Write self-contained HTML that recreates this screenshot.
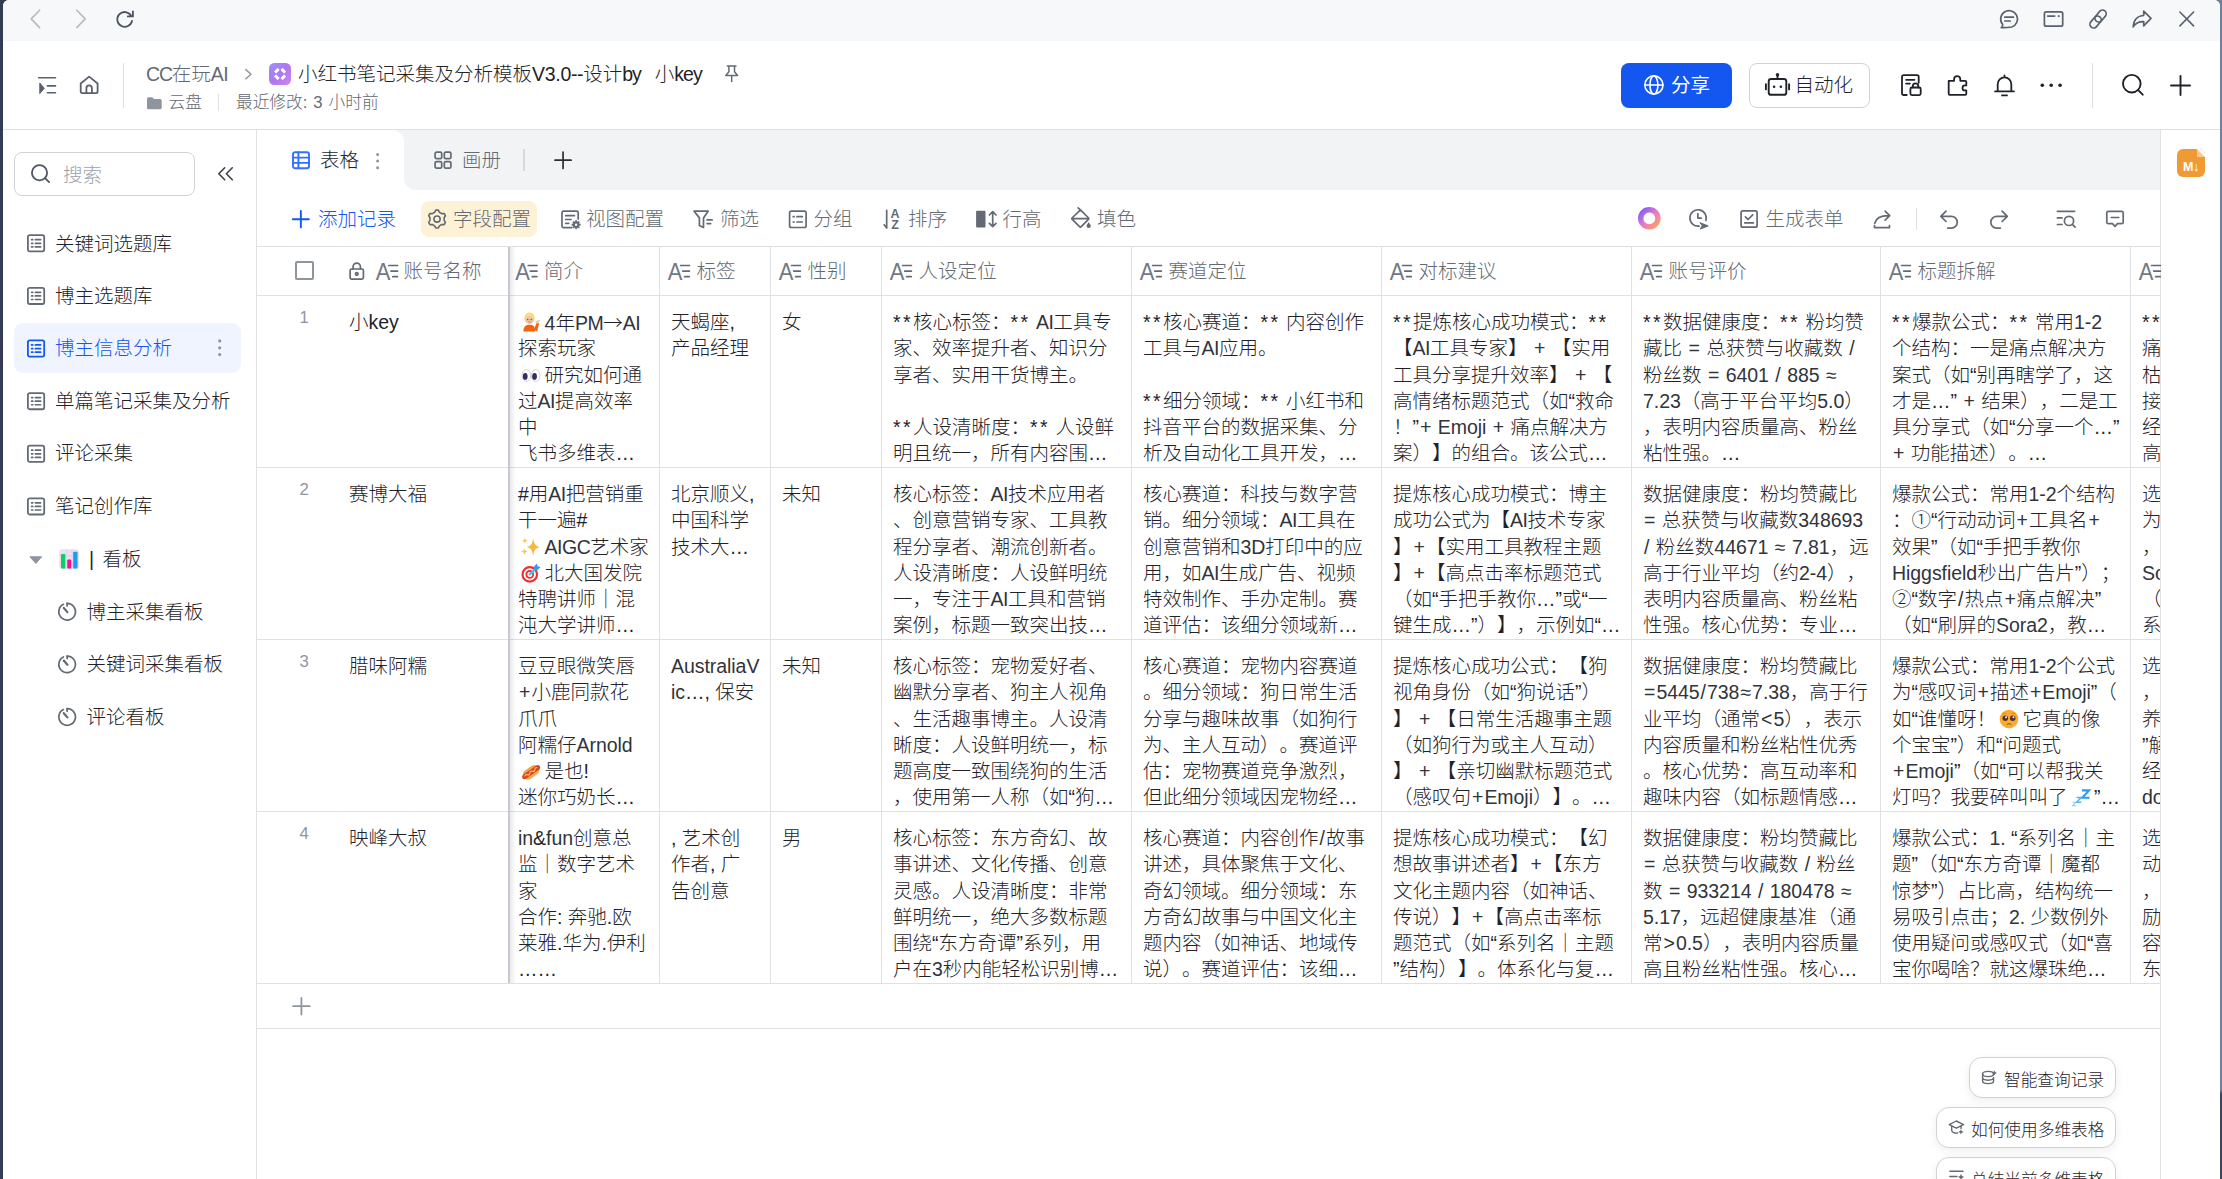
<!DOCTYPE html><html lang="zh-CN"><head><meta charset="utf-8"><title>小红书笔记采集及分析模板V3.0</title><style>*{box-sizing:border-box;margin:0;padding:0}
html,body{width:2222px;height:1179px;overflow:hidden;background:#fff}
body{position:relative;font-family:"Liberation Sans","Noto Sans CJK SC",sans-serif;font-size:19.5px;color:#1f2329;font-weight:300;-webkit-font-smoothing:antialiased;text-spacing-trim:space-all;font-kerning:none}
.abs{position:absolute}
#edgeL{position:absolute;left:0;top:0;width:14px;height:1179px;background:#343c53}
#edgeR{position:absolute;left:2206px;top:0;width:16px;height:1179px;background:linear-gradient(#6f7ea3 0,#6f7ea3 1090px,#3b4562 1094px)}
#win{position:absolute;left:3px;top:0;width:2217px;height:1179px;background:#fff;border-radius:6px 6px 0 0;overflow:hidden}
#pg{position:absolute;left:-3px;top:0;width:2222px;height:1179px}
#topbar{position:absolute;left:0;top:0;width:2222px;height:41px;background:#f7f8fa}
#header{position:absolute;left:0;top:41px;width:2222px;height:89px;background:#fff;border-bottom:1px solid #dee0e3}
.t{position:absolute;white-space:nowrap;line-height:26px;margin-left:-1px}
.g{color:#646a73}
.s{font-size:16.7px}
#sidebar{position:absolute;left:0;top:130px;width:257px;height:1049px;border-right:1px solid #dee0e3;background:#fff}
#search{position:absolute;left:14px;top:22px;width:181px;height:44px;border:1px solid #d0d3d6;border-radius:8px}
.si{position:absolute;left:56px;margin-left:-1px;white-space:nowrap;line-height:26px}
#act{position:absolute;left:14px;top:193px;width:227px;height:50px;border-radius:9px;background:#eff4ff}
#tabbar{position:absolute;left:257px;top:130px;width:1903px;height:60px;background:#f2f3f5}
#tabA{position:absolute;left:0;top:0;width:147px;height:60px;background:#fff;border-radius:0 12px 0 0}
#tabC{position:absolute;left:147px;top:48px;width:12px;height:12px;background:#fff}
#tabC i{position:absolute;left:0;top:0;width:12px;height:12px;background:#f2f3f5;border-radius:0 0 0 12px}
#toolbar{position:absolute;left:257px;top:190px;width:1903px;height:56px;background:#fff}
#fcfg{position:absolute;left:164px;top:11px;width:116px;height:36px;border-radius:8px;background:#fef2d6}
#rpanel{position:absolute;left:2160px;top:130px;width:60px;height:1049px;border-left:1px solid #dee0e3;background:#fff}
#grid{position:absolute;left:257px;top:246px;width:1903px;height:933px;overflow:hidden;border-top:1px solid #dee0e3}
.hrow{position:absolute;left:0;top:0;width:2200px;height:48px}
.hc{position:absolute;top:0;height:48px;border-left:1px solid #dee0e3;color:#646a73}
.hc.first{left:0;width:252px;border-left:none}
.hname{position:absolute;top:11px;margin-left:-1.5px;line-height:26px;white-space:nowrap}
.cb{position:absolute;left:38px;top:14px;width:19px;height:19px;border:2px solid #8f959e;border-radius:2px}
.row{position:absolute;left:0;width:2200px;height:173px;border-top:1px solid #dee0e3;border-bottom:1px solid #dee0e3}
.c{position:absolute;top:0;height:171px;border-left:1px solid #dee0e3;padding:13px 0 0 11px;overflow:hidden}
.c.first{left:0;width:252px;border-left:none;padding-left:92px}
.ln{height:26.3px;line-height:26.3px;white-space:nowrap}
.num{position:absolute;left:42.5px;top:9px;font-size:16.7px;color:#8f959e;line-height:26px}
.addrow{position:absolute;left:0;top:737px;width:2200px;height:45px;border-bottom:1px solid #dee0e3}
.frozen{position:absolute;left:251px;top:0;width:8px;height:736px;background:linear-gradient(90deg,#c3c7cd 0,#c3c7cd 1px,rgba(31,35,41,.11) 1px,rgba(31,35,41,0) 8px)}
.em{display:inline-block;width:20px;height:20px;vertical-align:-3.5px;margin:0 3.3px;overflow:visible}
.fb{position:absolute;height:41px;border:1px solid #d0d3d6;border-radius:13px;background:#fff;box-shadow:0 3px 10px rgba(31,35,41,.07);font-size:16.7px;line-height:39px;white-space:nowrap;color:#1f2329}
.fb span{position:absolute;top:2.5px}
#icons{position:absolute;left:0;top:0;width:2222px;height:1179px;pointer-events:none}

#tv{letter-spacing:-.3px}
#tb{letter-spacing:-1.1px;margin-right:14px}
#tk{letter-spacing:-.9px}
.la{letter-spacing:-.05px}
.lu{letter-spacing:-.5px}
.sy{padding:0 1px}
.ast{letter-spacing:2.4px}
.name .la{letter-spacing:-.7px}
.c0{padding-left:8px}
.la,.lu,.sy{color:#30343b}
.ar{font-family:"Noto Sans CJK SC",sans-serif}
</style></head><body>
<div id="edgeL"></div><div id="edgeR"></div>
<div id="win"><div id="pg">
<div id="topbar"></div>
<div id="header">
</div>
<div class="t g" style="left:147px;top:61px"><span style="letter-spacing:-1.2px">CC</span>在玩<span style="letter-spacing:-.6px">AI</span></div>
<div class="t" style="left:299px;top:61px" id="title">小红书笔记采集及分析模板<span id="tv">V3.0--</span>设计<span id="tb">by</span>小<span id="tk">key</span></div>
<div class="t g s" style="left:169.5px;top:90px">云盘</div>
<div class="abs" style="left:218px;top:94px;width:1px;height:17px;background:#dee0e3"></div>
<div class="t g s" style="left:237px;top:90px;word-spacing:1.3px">最近修改: 3 小时前</div>
<div class="abs" style="left:123px;top:63px;width:1px;height:45px;background:#dee0e3"></div>
<div class="abs" style="left:1621px;top:63px;width:111px;height:45px;border-radius:8px;background:#1456f0"></div>
<div class="t" style="left:1672px;top:72px;color:#fff;font-weight:400">分享</div>
<div class="abs" style="left:1749px;top:63px;width:121px;height:45px;border-radius:8px;border:1px solid #d0d3d6;background:#fff"></div>
<div class="t" style="left:1795.5px;top:72px">自动化</div>
<div class="abs" style="left:2092px;top:63px;width:1px;height:45px;background:#dee0e3"></div>

<div id="sidebar">
 <div id="search"></div>
 <div class="t" style="left:64px;top:31.5px;color:#9da2aa">搜索</div>
 <div id="act"></div>
 <div class="si" style="top:100.5px">关键词选题库</div>
 <div class="si" style="top:152.5px">博主选题库</div>
 <div class="si" style="top:205px;color:#1456f0">博主信息分析</div>
 <div class="si" style="top:258px">单篇笔记采集及分析</div>
 <div class="si" style="top:310px">评论采集</div>
 <div class="si" style="top:363px">笔记创作库</div>
 <div class="si" style="top:416px;left:90px;word-spacing:3px">| 看板</div>
 <div class="si" style="top:468.5px;left:87.5px">博主采集看板</div>
 <div class="si" style="top:521px;left:87.5px">关键词采集看板</div>
 <div class="si" style="top:574px;left:87.5px">评论看板</div>
</div>

<div id="tabbar"><div id="tabA"></div><div id="tabC"><i></i></div>
 <div class="t" style="left:64px;top:17px">表格</div>
 <div class="t g" style="left:206px;top:17px">画册</div>
 <div class="abs" style="left:266px;top:19px;width:2px;height:22px;background:#d5d8dc"></div>
</div>
<div id="toolbar">
 <div id="fcfg"></div>
 <div class="t" style="left:62px;top:16px;color:#1456f0">添加记录</div>
 <div class="t g" style="left:197px;top:16px">字段配置</div>
 <div class="t g" style="left:330px;top:16px">视图配置</div>
 <div class="t g" style="left:464px;top:16px">筛选</div>
 <div class="t g" style="left:557.5px;top:16px">分组</div>
 <div class="t g" style="left:652px;top:16px">排序</div>
 <div class="t g" style="left:746.5px;top:16px">行高</div>
 <div class="t g" style="left:841px;top:16px">填色</div>
 <div class="t g" style="left:1509.5px;top:16px">生成表单</div>
 <div class="abs" style="left:1659px;top:18px;width:1px;height:22px;background:#dee0e3"></div>
</div>
<div id="rpanel">
 <div class="abs" style="left:16px;top:19px;width:28px;height:28px;border-radius:6px;background:#f09a35;overflow:hidden">
  <div class="abs" style="right:0;top:0;width:0;height:0;border-style:solid;border-width:0 8px 8px 0;border-color:#fff #fff #f7c88f #f7c88f"></div>
  <div class="abs" style="left:0;top:11px;width:28px;text-align:center;font:bold 12.5px/14px 'Liberation Sans',sans-serif;color:#fff;letter-spacing:-.3px">M↓</div>
 </div>
</div>

<div id="grid"><div class="hrow"><div class="hc first"><span class="cb"></span><span class="hname" style="left:148px">账号名称</span></div><div class="hc" style="left:252px;width:150px"><span class="hname" style="left:35.5px">简介</span></div><div class="hc" style="left:402px;width:111px"><span class="hname" style="left:38px">标签</span></div><div class="hc" style="left:513px;width:111px"><span class="hname" style="left:38px">性别</span></div><div class="hc" style="left:624px;width:250px"><span class="hname" style="left:38px">人设定位</span></div><div class="hc" style="left:874px;width:250px"><span class="hname" style="left:38px">赛道定位</span></div><div class="hc" style="left:1124px;width:250px"><span class="hname" style="left:38px">对标建议</span></div><div class="hc" style="left:1374px;width:249px"><span class="hname" style="left:38px">账号评价</span></div><div class="hc" style="left:1623px;width:250px"><span class="hname" style="left:38px">标题拆解</span></div><div class="hc" style="left:1873px;width:250px"><span class="hname" style="left:38px"></span></div></div><div class="row" style="top:48px"><div class="c first"><span class="num">1</span><div class="ln name">小key</div></div><div class="c c0" style="left:252px;width:150px"><div class="ln"><svg class="em" viewBox="0 0 21 21"><g transform="translate(-.5,-2.6)"><path d="M3 21 C3 15.5 6 14 9.5 14 C13 14 15.5 15.5 15.5 21 Z" fill="#f7630c"/><path d="M14 19 L17.2 11.5 L19.6 12.4 L17.4 21 Z" fill="#f7630c"/><path d="M15.8 12 C15.5 10 17.5 8.6 20.6 8.9 L20.3 10.3 C19 10.4 18.4 11 18.6 12.6 Z" fill="#f1c6a3"/><circle cx="9.4" cy="8" r="5" fill="#f1c6a3"/><path d="M4 8.4 C3.4 3.4 6.4 1 9.6 1 C13 1 15.6 3.6 14.8 8.4 C13.6 6.4 12.4 5 9.4 4.8 C6.6 5 5.4 6.2 4 8.4 Z" fill="#f8de83"/><circle cx="7.6" cy="8.4" r=".7" fill="#5c4033"/><circle cx="11.2" cy="8.4" r=".7" fill="#5c4033"/><path d="M8.2 10.8 Q9.4 11.6 10.6 10.8" stroke="#b5543a" stroke-width=".7" fill="none"/></g></svg><span class="la">4</span>年<span class="lu">PM</span><span class="ar">→</span><span class="lu">AI</span></div><div class="ln">探索玩家</div><div class="ln"><svg class="em" viewBox="0 0 21 21"><ellipse cx="5.6" cy="11" rx="4.6" ry="6.2" fill="#fff" stroke="#c9c9d6" stroke-width=".9"/><ellipse cx="15.4" cy="11" rx="4.6" ry="6.2" fill="#fff" stroke="#c9c9d6" stroke-width=".9"/><ellipse cx="4.4" cy="12" rx="2.5" ry="3.6" fill="#3b2b63"/><ellipse cx="14.2" cy="12" rx="2.5" ry="3.6" fill="#3b2b63"/></svg>研究如何通</div><div class="ln">过<span class="lu">AI</span>提高效率</div><div class="ln">中</div><div class="ln">飞书多维表…</div></div><div class="c c1" style="left:402px;width:111px"><div class="ln">天蝎座,</div><div class="ln">产品经理</div></div><div class="c c2" style="left:513px;width:111px"><div class="ln">女</div></div><div class="c c3" style="left:624px;width:250px"><div class="ln"><span class="ast">**</span>核心标签：<span class="ast">**</span> <span class="lu">AI</span>工具专</div><div class="ln">家、效率提升者、知识分</div><div class="ln">享者、实用干货博主。</div><div class="ln">&nbsp;</div><div class="ln"><span class="ast">**</span>人设清晰度：<span class="ast">**</span> 人设鲜</div><div class="ln">明且统一，所有内容围…</div></div><div class="c c4" style="left:874px;width:250px"><div class="ln"><span class="ast">**</span>核心赛道：<span class="ast">**</span> 内容创作</div><div class="ln">工具与<span class="lu">AI</span>应用。</div><div class="ln">&nbsp;</div><div class="ln"><span class="ast">**</span>细分领域：<span class="ast">**</span> 小红书和</div><div class="ln">抖音平台的数据采集、分</div><div class="ln">析及自动化工具开发，…</div></div><div class="c c5" style="left:1124px;width:250px"><div class="ln"><span class="ast">**</span>提炼核心成功模式：<span class="ast">**</span></div><div class="ln">【<span class="lu">AI</span>工具专家】 <span class="sy">+</span> 【实用</div><div class="ln">工具分享提升效率】 <span class="sy">+</span> 【</div><div class="ln">高情绪标题范式（如“救命</div><div class="ln">！”<span class="sy">+</span> <span class="la">Emoji</span> <span class="sy">+</span> 痛点解决方</div><div class="ln">案）】的组合。该公式…</div></div><div class="c c6" style="left:1374px;width:249px"><div class="ln"><span class="ast">**</span>数据健康度：<span class="ast">**</span> 粉均赞</div><div class="ln">藏比 <span class="sy">=</span> 总获赞与收藏数 <span class="sy">/</span></div><div class="ln">粉丝数 <span class="sy">=</span> <span class="la">6401</span> <span class="sy">/</span> <span class="la">885</span> <span class="sy">≈</span></div><div class="ln"><span class="la">7.23</span>（高于平台平均<span class="la">5.0</span>）</div><div class="ln">，表明内容质量高、粉丝</div><div class="ln">粘性强。…</div></div><div class="c c7" style="left:1623px;width:250px"><div class="ln"><span class="ast">**</span>爆款公式：<span class="ast">**</span> 常用<span class="la">1-2</span></div><div class="ln">个结构：一是痛点解决方</div><div class="ln">案式（如“别再瞎学了，这</div><div class="ln">才是…” <span class="sy">+</span> 结果），二是工</div><div class="ln">具分享式（如“分享一个…”</div><div class="ln"><span class="sy">+</span> 功能描述）。…</div></div><div class="c c8" style="left:1873px;width:250px"><div class="ln"><span class="ast">**</span>痛点解决</div><div class="ln">痛点</div><div class="ln">枯燥</div><div class="ln">接地</div><div class="ln">经验</div><div class="ln">高效</div></div></div><div class="row" style="top:220px"><div class="c first"><span class="num">2</span><div class="ln name">赛博大福</div></div><div class="c c0" style="left:252px;width:150px"><div class="ln">#用<span class="lu">AI</span>把营销重</div><div class="ln">干一遍#</div><div class="ln"><svg class="em" viewBox="0 0 21 21"><path d="M12.8 1.2 C13.7 7.4 15 9.2 19.8 10.6 C15 12 13.7 13.8 12.8 20 C11.9 13.8 10.6 12 5.8 10.6 C10.6 9.2 11.9 7.4 12.8 1.2 Z" fill="#f6b93b"/><path d="M4 .8 C4.3 2.8 4.9 3.4 6.9 3.9 C4.9 4.4 4.3 5 4 7 C3.7 5 3.1 4.4 1.1 3.9 C3.1 3.4 3.7 2.8 4 .8 Z" fill="#f8c555"/><path d="M3.6 11.6 C4 14 4.6 14.8 7 15.3 C4.6 15.8 4 16.6 3.6 19 C3.2 16.6 2.6 15.8 .2 15.3 C2.6 14.8 3.2 14 3.6 11.6 Z" fill="#f8c555"/></svg><span class="lu">AIGC</span>艺术家</div><div class="ln"><svg class="em" viewBox="0 0 21 21"><circle cx="9.2" cy="12" r="7.6" fill="#fff" stroke="#ee2f2f" stroke-width="2.3"/><circle cx="9.2" cy="12" r="3.6" fill="#fff" stroke="#ee2f2f" stroke-width="1.9"/><circle cx="9.2" cy="12" r="1" fill="#f3b7b7"/><path d="M9.4 11.8 L15.5 5.7" stroke="#3bc4ee" stroke-width="2.4" stroke-linecap="round"/><path d="M13.6 4 L16.4 .4 L17.6 3.4 L20.6 4.2 L17.4 7.4 L13.8 7.2 Z" fill="#2f9df4"/></svg>北大国发院</div><div class="ln">特聘讲师｜混</div><div class="ln">沌大学讲师…</div></div><div class="c c1" style="left:402px;width:111px"><div class="ln">北京顺义,</div><div class="ln">中国科学</div><div class="ln">技术大…</div></div><div class="c c2" style="left:513px;width:111px"><div class="ln">未知</div></div><div class="c c3" style="left:624px;width:250px"><div class="ln">核心标签：<span class="lu">AI</span>技术应用者</div><div class="ln">、创意营销专家、工具教</div><div class="ln">程分享者、潮流创新者。</div><div class="ln">人设清晰度：人设鲜明统</div><div class="ln">一，专注于<span class="lu">AI</span>工具和营销</div><div class="ln">案例，标题一致突出技…</div></div><div class="c c4" style="left:874px;width:250px"><div class="ln">核心赛道：科技与数字营</div><div class="ln">销。细分领域：<span class="lu">AI</span>工具在</div><div class="ln">创意营销和<span class="la">3D</span>打印中的应</div><div class="ln">用，如<span class="lu">AI</span>生成广告、视频</div><div class="ln">特效制作、手办定制。赛</div><div class="ln">道评估：该细分领域新…</div></div><div class="c c5" style="left:1124px;width:250px"><div class="ln">提炼核心成功模式：博主</div><div class="ln">成功公式为【<span class="lu">AI</span>技术专家</div><div class="ln">】<span class="sy">+</span>【实用工具教程主题</div><div class="ln">】<span class="sy">+</span>【高点击率标题范式</div><div class="ln">（如“手把手教你…”或“一</div><div class="ln">键生成…”）】，示例如“…</div></div><div class="c c6" style="left:1374px;width:249px"><div class="ln">数据健康度：粉均赞藏比</div><div class="ln"><span class="sy">=</span> 总获赞与收藏数<span class="la">348693</span></div><div class="ln"><span class="sy">/</span> 粉丝数<span class="la">44671</span> <span class="sy">≈</span> <span class="la">7.81</span>，远</div><div class="ln">高于行业平均（约<span class="la">2-4</span>），</div><div class="ln">表明内容质量高、粉丝粘</div><div class="ln">性强。核心优势：专业…</div></div><div class="c c7" style="left:1623px;width:250px"><div class="ln">爆款公式：常用<span class="la">1-2</span>个结构</div><div class="ln">：①“行动动词<span class="sy">+</span>工具名<span class="sy">+</span></div><div class="ln">效果”（如“手把手教你</div><div class="ln"><span class="la">Higgsfield</span>秒出广告片”）；</div><div class="ln">②“数字<span class="sy">/</span>热点<span class="sy">+</span>痛点解决”</div><div class="ln">（如“刷屏的<span class="la">Sora2</span>，教…</div></div><div class="c c8" style="left:1873px;width:250px"><div class="ln">选题方向</div><div class="ln">为主</div><div class="ln">，如</div><div class="ln"><span class="la">Sora</span></div><div class="ln">（如</div><div class="ln">系列</div></div></div><div class="row" style="top:392px"><div class="c first"><span class="num">3</span><div class="ln name">腊味阿糯</div></div><div class="c c0" style="left:252px;width:150px"><div class="ln">豆豆眼微笑唇</div><div class="ln"><span class="sy">+</span>小鹿同款花</div><div class="ln">爪爪</div><div class="ln">阿糯仔<span class="la">Arnold</span></div><div class="ln"><svg class="em" viewBox="0 0 21 21"><g transform="rotate(-35 10.5 10.5)"><rect x="1" y="5.6" width="19" height="10.4" rx="5.2" fill="#f4a64a"/><rect x="-.5" y="8.2" width="22" height="5" rx="2.5" fill="#d9402b"/><path d="M2.5 10.7 q1.6 -2 3.2 0 t3.2 0 t3.2 0 t3.2 0 t3.2 0" stroke="#ffd54f" stroke-width="1.2" fill="none"/></g></svg>是也!</div><div class="ln">迷你巧奶长…</div></div><div class="c c1" style="left:402px;width:111px"><div class="ln"><span class="la">AustraliaV</span></div><div class="ln"><span class="la">ic</span>…, 保安</div></div><div class="c c2" style="left:513px;width:111px"><div class="ln">未知</div></div><div class="c c3" style="left:624px;width:250px"><div class="ln">核心标签：宠物爱好者、</div><div class="ln">幽默分享者、狗主人视角</div><div class="ln">、生活趣事博主。人设清</div><div class="ln">晰度：人设鲜明统一，标</div><div class="ln">题高度一致围绕狗的生活</div><div class="ln">，使用第一人称（如“狗…</div></div><div class="c c4" style="left:874px;width:250px"><div class="ln">核心赛道：宠物内容赛道</div><div class="ln">。细分领域：狗日常生活</div><div class="ln">分享与趣味故事（如狗行</div><div class="ln">为、主人互动）。赛道评</div><div class="ln">估：宠物赛道竞争激烈，</div><div class="ln">但此细分领域因宠物经…</div></div><div class="c c5" style="left:1124px;width:250px"><div class="ln">提炼核心成功公式：【狗</div><div class="ln">视角身份（如“狗说话”）</div><div class="ln">】 <span class="sy">+</span> 【日常生活趣事主题</div><div class="ln">（如狗行为或主人互动）</div><div class="ln">】 <span class="sy">+</span> 【亲切幽默标题范式</div><div class="ln">（感叹句<span class="sy">+</span><span class="la">Emoji</span>）】。…</div></div><div class="c c6" style="left:1374px;width:249px"><div class="ln">数据健康度：粉均赞藏比</div><div class="ln"><span class="sy">=</span><span class="la">5445</span><span class="sy">/</span><span class="la">738</span><span class="sy">≈</span><span class="la">7.38</span>，高于行</div><div class="ln">业平均（通常<span class="sy">&lt;</span><span class="la">5</span>），表示</div><div class="ln">内容质量和粉丝粘性优秀</div><div class="ln">。核心优势：高互动率和</div><div class="ln">趣味内容（如标题情感…</div></div><div class="c c7" style="left:1623px;width:250px"><div class="ln">爆款公式：常用<span class="la">1-2</span>个公式</div><div class="ln">为“感叹词<span class="sy">+</span>描述<span class="sy">+</span><span class="la">Emoji</span>”（</div><div class="ln">如“谁懂呀！<svg class="em" viewBox="0 0 21 21"><circle cx="10.5" cy="10.5" r="9.8" fill="#fdaa2e"/><circle cx="6.6" cy="9.6" r="2.9" fill="#4e342e"/><circle cx="14.4" cy="9.6" r="2.9" fill="#4e342e"/><circle cx="7.4" cy="8.6" r="1" fill="#fff"/><circle cx="15.2" cy="8.6" r="1" fill="#fff"/><path d="M8.2 16.2 Q10.5 14.6 12.8 16.2" stroke="#6d4c41" stroke-width="1" fill="none"/><path d="M3.6 5.6 Q5.6 4 7.6 4.6 M13.4 4.6 Q15.4 4 17.4 5.6" stroke="#c98a1e" stroke-width="1" fill="none"/></svg>它真的像</div><div class="ln">个宝宝”）和“问题式</div><div class="ln"><span class="sy">+</span><span class="la">Emoji</span>”（如“可以帮我关</div><div class="ln">灯吗？我要碎叫叫了<svg class="em" viewBox="0 0 21 21"><g fill="none" stroke="#2f9bf0" stroke-linejoin="miter"><path d="M11.5 2.5 H19 L11.8 10.2 H19.4" stroke-width="2.2"/><path d="M5.8 10 H10.6 L6 15 H10.8" stroke-width="1.6" stroke="#58b4f5"/><path d="M1.6 15 H5 L1.8 18.6 H5.2" stroke-width="1.2" stroke="#8ccbf8"/></g></svg>”…</div></div><div class="c c8" style="left:1873px;width:250px"><div class="ln">选题</div><div class="ln">，如</div><div class="ln">养狗</div><div class="ln">”解决</div><div class="ln">经历</div><div class="ln"><span class="la">dog</span></div></div></div><div class="row" style="top:564px"><div class="c first"><span class="num">4</span><div class="ln name">映峰大叔</div></div><div class="c c0" style="left:252px;width:150px"><div class="ln"><span class="la">in</span>&amp;<span class="la">fun</span>创意总</div><div class="ln">监｜数字艺术</div><div class="ln">家</div><div class="ln">合作: 奔驰.欧</div><div class="ln">莱雅.华为.伊利</div><div class="ln">……</div></div><div class="c c1" style="left:402px;width:111px"><div class="ln">, 艺术创</div><div class="ln">作者, 广</div><div class="ln">告创意</div></div><div class="c c2" style="left:513px;width:111px"><div class="ln">男</div></div><div class="c c3" style="left:624px;width:250px"><div class="ln">核心标签：东方奇幻、故</div><div class="ln">事讲述、文化传播、创意</div><div class="ln">灵感。人设清晰度：非常</div><div class="ln">鲜明统一，绝大多数标题</div><div class="ln">围绕“东方奇谭”系列，用</div><div class="ln">户在<span class="la">3</span>秒内能轻松识别博…</div></div><div class="c c4" style="left:874px;width:250px"><div class="ln">核心赛道：内容创作<span class="sy">/</span>故事</div><div class="ln">讲述，具体聚焦于文化、</div><div class="ln">奇幻领域。细分领域：东</div><div class="ln">方奇幻故事与中国文化主</div><div class="ln">题内容（如神话、地域传</div><div class="ln">说）。赛道评估：该细…</div></div><div class="c c5" style="left:1124px;width:250px"><div class="ln">提炼核心成功模式：【幻</div><div class="ln">想故事讲述者】<span class="sy">+</span>【东方</div><div class="ln">文化主题内容（如神话、</div><div class="ln">传说）】<span class="sy">+</span>【高点击率标</div><div class="ln">题范式（如“系列名｜主题</div><div class="ln">”结构）】。体系化与复…</div></div><div class="c c6" style="left:1374px;width:249px"><div class="ln">数据健康度：粉均赞藏比</div><div class="ln"><span class="sy">=</span> 总获赞与收藏数 <span class="sy">/</span> 粉丝</div><div class="ln">数 <span class="sy">=</span> <span class="la">933214</span> <span class="sy">/</span> <span class="la">180478</span> <span class="sy">≈</span></div><div class="ln"><span class="la">5.17</span>，远超健康基准（通</div><div class="ln">常<span class="sy">&gt;</span><span class="la">0.5</span>），表明内容质量</div><div class="ln">高且粉丝粘性强。核心…</div></div><div class="c c7" style="left:1623px;width:250px"><div class="ln">爆款公式：<span class="la">1.</span> “系列名｜主</div><div class="ln">题”（如“东方奇谭｜魔都</div><div class="ln">惊梦”）占比高，结构统一</div><div class="ln">易吸引点击；<span class="la">2.</span> 少数例外</div><div class="ln">使用疑问或感叹式（如“喜</div><div class="ln">宝你喝啥？就这爆珠绝…</div></div><div class="c c8" style="left:1873px;width:250px"><div class="ln">选题</div><div class="ln">动漫</div><div class="ln">，如</div><div class="ln">励志</div><div class="ln">容易</div><div class="ln">东方</div></div></div><div class="addrow"></div><div class="frozen"></div></div>
<div class="fb" style="left:1969px;top:1057px;width:147px"><span style="left:34px">智能查询记录</span></div>
<div class="fb" style="left:1936px;top:1107px;width:180px"><span style="left:34px">如何使用多维表格</span></div>
<div class="fb" style="left:1936px;top:1157px;width:180px"><span style="left:34px">总结当前多维表格</span></div>
</div></div>

<svg id="icons" width="2222" height="1179" viewBox="0 0 2222 1179"><g transform="translate(30.4,9.7)" stroke="#b6bac1" stroke-width="1.6" fill="none" stroke-linecap="round" stroke-linejoin="round" ><path d="M9.2 .5 L.8 9.2 L9.2 17.9" /></g><g transform="translate(76.3,9.7)" stroke="#b6bac1" stroke-width="1.6" fill="none" stroke-linecap="round" stroke-linejoin="round" ><path d="M.5 .5 L8.9 9.2 L.5 17.9" /></g><g transform="translate(116.4,10.5)" stroke="#4b5260" stroke-width="1.8" fill="none" stroke-linecap="round" stroke-linejoin="round" ><path d="M14.6 5 A7.4 7.4 0 1 0 15.6 10.3" /><path d="M16.5 .8 V5.9 H11.4" /></g><g transform="translate(1999.4,9.6)" stroke="#59616e" stroke-width="1.7" fill="none" stroke-linecap="round" stroke-linejoin="round" ><path d="M3.3 14.9 A8.4 8.4 0 1 1 12.4 17.4 Q7 18.2 1.8 18 Q3.6 16.6 3.3 14.9 Z" /><path d="M5.4 7.6 H14 M5.4 11.4 H10.8" /></g><g transform="translate(2043.5,10.9)" stroke="#59616e" stroke-width="1.7" fill="none" stroke-linecap="round" stroke-linejoin="round" ><rect x=".9" y=".9" width="18.3" height="14.4" rx="1.8"/><path d="M4.2 5.2 H11.2 M14.9 5.2 h.6" /></g><g transform="translate(2089.3,9.6)" stroke="#59616e" stroke-width="1.7" fill="none" stroke-linecap="round" stroke-linejoin="round" ><g transform="translate(8.8,9.4) rotate(-50)"><rect x="-10.6" y="-3.7" width="13.4" height="7.4" rx="3.7"/><rect x="-2.8" y="-3.7" width="13.4" height="7.4" rx="3.7"/></g></g><g transform="translate(2132.3,10.3)" stroke="#59616e" stroke-width="1.7" fill="none" stroke-linecap="round" stroke-linejoin="round" ><path d="M11.4 .9 L18.7 8 L11.4 15.6 V11.4 C6.6 11.2 3.2 12.8 .9 16.6 C1.3 9.6 5.4 5.5 11.4 5.2 Z" /></g><g transform="translate(2179.1,11.2)" stroke="#59616e" stroke-width="1.6" fill="none" stroke-linecap="round" stroke-linejoin="round" ><path d="M.8 .8 L14.5 14.7 M14.5 .8 L.8 14.7" /></g><g transform="translate(37.8,76.9)" stroke="#59616e" stroke-width="1.6" fill="none" stroke-linecap="round" stroke-linejoin="round" ><path d="M.8 .8 H17.7 M9.6 9 H17.7 M9.6 15.8 H17.7" /><path d="M2.2 6.4 L6.5 11.4 L2.2 16.4 Z" fill="#59616e" stroke-width="1"/></g><g transform="translate(79.7,75.6)" stroke="#59616e" stroke-width="1.8" fill="none" stroke-linecap="round" stroke-linejoin="round" ><path d="M1 7.9 L9.45 1 L17.9 7.9 V15.9 a1.6 1.6 0 0 1 -1.6 1.6 H2.6 A1.6 1.6 0 0 1 1 15.9 Z" /><path d="M6.7 17.4 V12.6 a2.75 2.75 0 0 1 5.5 0 V17.4" /></g><g transform="translate(245,68.8)" stroke="#8f959e" stroke-width="1.5" fill="none" stroke-linecap="round" stroke-linejoin="round" ><path d="M.8 .8 L6 5.4 L.8 10" /></g><defs><linearGradient id="bt" x1="0" y1="0" x2="1" y2="1"><stop offset="0" stop-color="#9990f9"/><stop offset=".5" stop-color="#b077f1"/><stop offset="1" stop-color="#cb86ec"/></linearGradient><linearGradient id="ai" x1="0" y1="0" x2="1" y2="1"><stop offset="0" stop-color="#7a5cf8"/><stop offset=".5" stop-color="#e879c8"/><stop offset="1" stop-color="#ffa05c"/></linearGradient></defs><g transform="translate(269,63)"><rect width="22" height="21.9" rx="5.2" fill="url(#bt)"/><g transform="translate(11.1,11) rotate(45)" fill="#fff"><rect x="-2.6" y="-6.15" width="5.2" height="3.1" rx=".5"/><rect x="-2.6" y="3.05" width="5.2" height="3.1" rx=".5"/><rect x="-6.15" y="-2.6" width="3.1" height="5.2" rx=".5"/><rect x="3.05" y="-2.6" width="3.1" height="5.2" rx=".5"/></g></g><g transform="translate(147,97.2)" stroke="none" stroke-width="1.7" fill="#8f959e" stroke-linecap="round" stroke-linejoin="round" ><path d="M0 1.5 a1.5 1.5 0 0 1 1.5 -1.5 H5.3 L6.9 1.9 H13.2 a1.5 1.5 0 0 1 1.5 1.5 V10.6 a1.5 1.5 0 0 1 -1.5 1.5 H1.5 A1.5 1.5 0 0 1 0 10.6 Z" /></g><g transform="translate(724.6,65.2)" stroke="#646a73" stroke-width="1.5" fill="none" stroke-linecap="round" stroke-linejoin="round" ><path d="M2.8 .8 H11.4 M4.3 .8 V6.6 L1.2 10.2 H13 L9.9 6.6 V.8 M7.1 10.2 V16.4" /></g><g transform="translate(1643.9,75)" stroke="#fff" stroke-width="1.6" fill="none" stroke-linecap="round" stroke-linejoin="round" ><circle cx="10" cy="10" r="9.1"/><ellipse cx="10" cy="10" rx="4" ry="9.1"/><path d="M1 10 H19" /></g><g transform="translate(1765,73)" stroke="#1f2329" stroke-width="1.9" fill="none" stroke-linecap="round" stroke-linejoin="round" ><rect x="3.7" y="6" width="17.6" height="15.8" rx="2.4"/><path d="M12.5 2 V6 M.9 11.2 V16.4 M24.1 11.2 V16.4" /><circle cx="12.5" cy="1.7" r="1.7" fill="#1f2329" stroke="none"/><circle cx="9.1" cy="13.8" r="1.3" fill="#1f2329" stroke="none"/><circle cx="15.9" cy="13.8" r="1.3" fill="#1f2329" stroke="none"/></g><g transform="translate(1901.1,74.2)" stroke="#1f2329" stroke-width="1.8" fill="none" stroke-linecap="round" stroke-linejoin="round" ><path d="M5.6 20.8 H2.5 a1.6 1.6 0 0 1 -1.6 -1.6 V2.5 A1.6 1.6 0 0 1 2.5 .9 H16 a1.6 1.6 0 0 1 1.6 1.6 V8.6 M5 5.6 H13.4 M5 9.4 H8.8" /><rect x="9.3" y="13.3" width="10.3" height="7.6" rx="1.5"/><path d="M11.7 13.2 V11.9 a2.75 2.75 0 0 1 5.5 0 V13.2" /></g><g transform="translate(1947.7,74.2)" stroke="#1f2329" stroke-width="1.8" fill="none" stroke-linecap="round" stroke-linejoin="round" ><path d="M1 6.6 H6.4 V5 a3.1 3.1 0 1 1 6.2 0 V6.6 H17.6 a1 1 0 0 1 1 1 V11.2 H17.3 a2.5 2.5 0 1 0 0 5 H18.6 V19.6 a1 1 0 0 1 -1 1 H2 a1 1 0 0 1 -1 -1 Z" /></g><g transform="translate(1994.2,74.6)" stroke="#1f2329" stroke-width="1.8" fill="none" stroke-linecap="round" stroke-linejoin="round" ><path d="M3.5 16.7 V9.6 a6.8 6.8 0 0 1 13.6 0 V16.7 M.9 16.8 H19.7 M7.8 20.8 H12.8 M10.3 .9 v1.6" /></g><g fill="#1f2329"><circle cx="2042.3" cy="85.2" r="1.8"/><circle cx="2051.2" cy="85.2" r="1.8"/><circle cx="2060.1" cy="85.2" r="1.8"/></g><g transform="translate(2122,73.9)" stroke="#1f2329" stroke-width="1.9" fill="none" stroke-linecap="round" stroke-linejoin="round" ><circle cx="9.8" cy="9.8" r="8.8"/><path d="M16.2 16.2 L20.7 20.8" /></g><g transform="translate(2170.1,75)" stroke="#1f2329" stroke-width="1.9" fill="none" stroke-linecap="round" stroke-linejoin="round" ><path d="M10.4 .9 V20 M.9 10.45 H19.9" /></g><g transform="translate(30.9,164.2)" stroke="#4f5560" stroke-width="1.8" fill="none" stroke-linecap="round" stroke-linejoin="round" ><circle cx="8.6" cy="8.5" r="7.6"/><path d="M14.1 14 L18.2 17.9" /></g><g transform="translate(217.9,167)" stroke="#3c424b" stroke-width="1.6" fill="none" stroke-linecap="round" stroke-linejoin="round" ><path d="M6.8 .8 L.9 6.8 L6.8 12.8 M14.4 .8 L8.5 6.8 L14.4 12.8" /></g><g transform="translate(27,234.3)" stroke="#646a73" stroke-width="1.8" fill="none" stroke-linecap="round" stroke-linejoin="round" ><rect x=".9" y=".9" width="16.3" height="16.2" rx="1.8"/><path d="M4.6 5.4 h1.2 M8.4 5.4 H13.6 M4.6 9 h1.2 M8.4 9 H13.6 M4.6 12.6 h1.2 M8.4 12.6 H13.6" stroke-width="1.7"/></g><g transform="translate(27,286.92)" stroke="#646a73" stroke-width="1.8" fill="none" stroke-linecap="round" stroke-linejoin="round" ><rect x=".9" y=".9" width="16.3" height="16.2" rx="1.8"/><path d="M4.6 5.4 h1.2 M8.4 5.4 H13.6 M4.6 9 h1.2 M8.4 9 H13.6 M4.6 12.6 h1.2 M8.4 12.6 H13.6" stroke-width="1.7"/></g><g transform="translate(27,339.54)" stroke="#1456f0" stroke-width="1.8" fill="none" stroke-linecap="round" stroke-linejoin="round" ><rect x=".9" y=".9" width="16.3" height="16.2" rx="1.8"/><path d="M4.6 5.4 h1.2 M8.4 5.4 H13.6 M4.6 9 h1.2 M8.4 9 H13.6 M4.6 12.6 h1.2 M8.4 12.6 H13.6" stroke-width="1.7"/></g><g transform="translate(27,392.16)" stroke="#646a73" stroke-width="1.8" fill="none" stroke-linecap="round" stroke-linejoin="round" ><rect x=".9" y=".9" width="16.3" height="16.2" rx="1.8"/><path d="M4.6 5.4 h1.2 M8.4 5.4 H13.6 M4.6 9 h1.2 M8.4 9 H13.6 M4.6 12.6 h1.2 M8.4 12.6 H13.6" stroke-width="1.7"/></g><g transform="translate(27,444.78000000000003)" stroke="#646a73" stroke-width="1.8" fill="none" stroke-linecap="round" stroke-linejoin="round" ><rect x=".9" y=".9" width="16.3" height="16.2" rx="1.8"/><path d="M4.6 5.4 h1.2 M8.4 5.4 H13.6 M4.6 9 h1.2 M8.4 9 H13.6 M4.6 12.6 h1.2 M8.4 12.6 H13.6" stroke-width="1.7"/></g><g transform="translate(27,497.4)" stroke="#646a73" stroke-width="1.8" fill="none" stroke-linecap="round" stroke-linejoin="round" ><rect x=".9" y=".9" width="16.3" height="16.2" rx="1.8"/><path d="M4.6 5.4 h1.2 M8.4 5.4 H13.6 M4.6 9 h1.2 M8.4 9 H13.6 M4.6 12.6 h1.2 M8.4 12.6 H13.6" stroke-width="1.7"/></g><g fill="#8f959e"><circle cx="219.7" cy="340.9" r="1.6"/><circle cx="219.7" cy="347.8" r="1.6"/><circle cx="219.7" cy="354.6" r="1.6"/></g><path d="M30 556.8 H41.6 L35.8 563.4 Z" fill="#8f959e" stroke="#8f959e" stroke-width="1" stroke-linejoin="round"/><g transform="translate(59.3,549.3)"><rect x="0" y="0" width="19.6" height="19.6" rx="3" fill="#e9dff1"/><path d="M0 6.6 H19.6 M0 13 H19.6 M6.9 0 V19.6 M12.9 0 V19.6" stroke="#dccfe8" stroke-width=".8"/><rect x="1.7" y="4.6" width="4.3" height="14.6" rx=".8" fill="#0ccf63"/><rect x="8" y="10.2" width="3.9" height="9" rx=".8" fill="#f2128c"/><rect x="13.9" y="2.5" width="4.3" height="16.7" rx=".8" fill="#1d9cf0"/></g><g transform="translate(57.8,602.54)" stroke="#646a73" stroke-width="1.7" fill="none" stroke-linecap="round" stroke-linejoin="round" ><path d="M5.6 1.8 A8.3 8.3 0 1 0 9.3 .9" /><path d="M9.6 9.6 L6 5.4" stroke-width="2.2"/><path d="M9.3 .9 V3.4" /></g><g transform="translate(57.8,655.1600000000001)" stroke="#646a73" stroke-width="1.7" fill="none" stroke-linecap="round" stroke-linejoin="round" ><path d="M5.6 1.8 A8.3 8.3 0 1 0 9.3 .9" /><path d="M9.6 9.6 L6 5.4" stroke-width="2.2"/><path d="M9.3 .9 V3.4" /></g><g transform="translate(57.8,707.78)" stroke="#646a73" stroke-width="1.7" fill="none" stroke-linecap="round" stroke-linejoin="round" ><path d="M5.6 1.8 A8.3 8.3 0 1 0 9.3 .9" /><path d="M9.6 9.6 L6 5.4" stroke-width="2.2"/><path d="M9.3 .9 V3.4" /></g><g transform="translate(292,151.2)" stroke="#3370ff" stroke-width="1.9" fill="none" stroke-linecap="round" stroke-linejoin="round" ><rect x="1" y="1" width="16" height="16" rx="2"/><path d="M6.4 1 V17 M1 6.4 H17 M1 11.7 H17" /></g><g fill="#8f959e"><circle cx="377.6" cy="154.5" r="1.5"/><circle cx="377.6" cy="161.1" r="1.5"/><circle cx="377.6" cy="167.8" r="1.5"/></g><g transform="translate(434.2,151.2)" stroke="#646a73" stroke-width="1.7" fill="none" stroke-linecap="round" stroke-linejoin="round" ><rect x=".9" y=".9" width="6.6" height="6.6" rx="1.5"/><rect x="10.1" y=".9" width="6.6" height="6.6" rx="1.5"/><rect x=".9" y="10.4" width="6.6" height="6.6" rx="1.5"/><rect x="10.1" y="10.4" width="6.6" height="6.6" rx="1.5"/></g><g transform="translate(554.2,151.2)" stroke="#2b2f36" stroke-width="1.7" fill="none" stroke-linecap="round" stroke-linejoin="round" ><path d="M8.85 .8 V17.2 M.8 9 H16.9" /></g><g transform="translate(292,210.2)" stroke="#1456f0" stroke-width="1.9" fill="none" stroke-linecap="round" stroke-linejoin="round" ><path d="M8.85 .8 V17.2 M.8 9 H16.9" /></g><g transform="translate(427.2,209.4)" stroke="#646a73" stroke-width="1.6" fill="none" stroke-linecap="round" stroke-linejoin="round" ><path d="M18.21 12.99 L16.92 15.22 L14.53 15.12 L12.25 16.44 L11.14 18.56 L8.56 18.56 L7.45 16.44 L5.17 15.12 L2.78 15.22 L1.49 12.99 L2.77 10.96 L2.77 8.34 L1.49 6.31 L2.78 4.08 L5.17 4.18 L7.45 2.86 L8.56 0.74 L11.14 0.74 L12.25 2.86 L14.53 4.18 L16.92 4.08 L18.21 6.31 L16.93 8.34 L16.93 10.96 Z" /><circle cx="9.85" cy="9.65" r="3.1"/></g><g transform="translate(561.1,210.3)" stroke="#646a73" stroke-width="1.7" fill="none" stroke-linecap="round" stroke-linejoin="round" ><path d="M10.6 17.4 H2.4 a1.5 1.5 0 0 1 -1.5 -1.5 V2.4 A1.5 1.5 0 0 1 2.4 .9 H15.6 a1.5 1.5 0 0 1 1.5 1.5 V8.8 M4.6 5.4 H13.3 M4.6 9.2 H10 M4.6 13 H7.6" /><path d="M19.27 13.94 L19.27 14.86 L18.10 15.21 L17.76 16.02 L18.35 17.10 L17.70 17.75 L16.62 17.16 L15.81 17.50 L15.46 18.67 L14.54 18.67 L14.19 17.50 L13.38 17.16 L12.30 17.75 L11.65 17.10 L12.24 16.02 L11.90 15.21 L10.73 14.86 L10.73 13.94 L11.90 13.59 L12.24 12.78 L11.65 11.70 L12.30 11.05 L13.38 11.64 L14.19 11.30 L14.54 10.13 L15.46 10.13 L15.81 11.30 L16.62 11.64 L17.70 11.05 L18.35 11.70 L17.76 12.78 L18.10 13.59 Z" fill="#646a73" stroke-width=".6"/><circle cx="15" cy="14.4" r="1.2" fill="#fff" stroke="none"/></g><g transform="translate(693.1,210.3)" stroke="#646a73" stroke-width="1.7" fill="none" stroke-linecap="round" stroke-linejoin="round" ><path d="M1 .9 H15 L10.4 7.6 V17.2 L6.3 15.2 V7.6 Z" /><path d="M14 9.6 H19 M14 13.3 H17.6" /></g><g transform="translate(788.7,210.3)" stroke="#646a73" stroke-width="1.7" fill="none" stroke-linecap="round" stroke-linejoin="round" ><rect x=".9" y=".9" width="16.5" height="16.3" rx="1.8"/><path d="M4.5 6.4 h.9 M8.2 6.4 H13.6 M4.5 11.7 h.9 M8.2 11.7 H13.6" /></g><g transform="translate(883.3,209.4)" stroke="#646a73" stroke-width="1.7" fill="none" stroke-linecap="round" stroke-linejoin="round" ><path d="M3.4 .9 V18.4 M.8 15.4 L3.4 18.6" /><text x="7.2" y="8.9" font-family="Liberation Sans,sans-serif" font-size="12.5" font-weight="bold" fill="#646a73" stroke="none">A</text><text x="7.9" y="19.6" font-family="Liberation Sans,sans-serif" font-size="12.5" font-weight="bold" fill="#646a73" stroke="none">Z</text></g><g transform="translate(976.1,210.7)" stroke="#646a73" stroke-width="1.7" fill="none" stroke-linecap="round" stroke-linejoin="round" ><rect x="0" y="0" width="9.4" height="16.9" rx="1" fill="#646a73" stroke="none"/><path d="M16.6 1 V15.9 M13.3 4.3 L16.6 1 L19.9 4.3 M13.3 12.6 L16.6 15.9 L19.9 12.6" /></g><g transform="translate(1070.9,207)" stroke="#646a73" stroke-width="1.7" fill="none" stroke-linecap="round" stroke-linejoin="round" ><path d="M9.6 2.9 L17.7 11 a.9 .9 0 0 1 0 1.2 L10.1 19.9 a.9 .9 0 0 1 -1.2 0 L1.1 12.2 a.9 .9 0 0 1 0 -1.2 Z M7.3 .8 L11.2 4.6 M1.3 11.7 H17.6" /><path d="M17.8 15.2 C19.2 17 19.9 17.9 19.9 18.9 a2.1 2.1 0 0 1 -4.2 0 C15.7 17.9 16.4 17 17.8 15.2 Z" fill="#646a73" stroke="none"/></g><circle cx="1649.3" cy="218.3" r="8.6" fill="none" stroke="url(#ai)" stroke-width="5.4"/><g transform="translate(1688.9,208.9)" stroke="#646a73" stroke-width="1.7" fill="none" stroke-linecap="round" stroke-linejoin="round" ><path d="M17 11.6 A8.2 8.2 0 1 0 10.2 17.2" /><path d="M9 4.6 V9.2 H12.4" /><path d="M11.4 13.9 L19.3 17 L11.4 20.2 L13.2 17 Z" fill="#646a73" stroke-width="1"/></g><g transform="translate(1740.2,210)" stroke="#646a73" stroke-width="1.7" fill="none" stroke-linecap="round" stroke-linejoin="round" ><rect x=".9" y=".9" width="16" height="16.3" rx="1.8"/><path d="M5.2 6.9 L7.8 9.5 L12.5 4.8 M4.6 12.9 H13.2" /></g><g transform="translate(1873.5,210.3)" stroke="#646a73" stroke-width="1.7" fill="none" stroke-linecap="round" stroke-linejoin="round" ><path d="M1.2 13 C2.6 7.4 8 5.2 15.6 5.4 M11.6 .9 L16.2 5.4 L11.6 9.9 M1 15.2 V17.3 H16 V15.2" /></g><g transform="translate(1939.8,210.3)" stroke="#646a73" stroke-width="1.7" fill="none" stroke-linecap="round" stroke-linejoin="round" ><path d="M6.2 .9 L1 6 L6.2 11.2 M1.2 6 H11.6 A5.9 5.9 0 0 1 11.6 17.8 H8" /></g><g transform="translate(1989.8,210.3)" stroke="#646a73" stroke-width="1.7" fill="none" stroke-linecap="round" stroke-linejoin="round" ><path d="M12.3 .9 L17.5 6 L12.3 11.2 M17.3 6 H6.9 A5.9 5.9 0 0 0 6.9 17.8 H10.5" /></g><g transform="translate(2056.6,210.5)" stroke="#646a73" stroke-width="1.7" fill="none" stroke-linecap="round" stroke-linejoin="round" ><path d="M.8 .9 H18 M.8 7.4 H5.4 M.8 14 H5.4 M15.8 13.9 L18.5 16.6" /><circle cx="12.4" cy="10.4" r="4.6"/></g><g transform="translate(2105.9,210.5)" stroke="#646a73" stroke-width="1.7" fill="none" stroke-linecap="round" stroke-linejoin="round" ><path d="M2.4 .9 H15.8 a1.5 1.5 0 0 1 1.5 1.5 V11.7 a1.5 1.5 0 0 1 -1.5 1.5 H11.6 L9.1 15.8 L6.6 13.2 H2.4 A1.5 1.5 0 0 1 .9 11.7 V2.4 A1.5 1.5 0 0 1 2.4 .9 Z M5.4 7 H12.8" /></g><g transform="translate(349.2,262.3)" stroke="#646a73" stroke-width="1.7" fill="none" stroke-linecap="round" stroke-linejoin="round" ><rect x=".9" y="6.7" width="13.3" height="10.1" rx="1.6"/><path d="M3.9 6.6 V4.5 a3.65 3.65 0 0 1 7.3 0 V6.6" /><circle cx="7.55" cy="11.7" r="1.3"/></g><g transform="translate(376.2,262.7)"><text transform="scale(.9,1)" x="-0.4" y="16.9" font-family="Liberation Sans,sans-serif" font-size="24.4" fill="#727883">A</text><path d="M12.6 2.8 H21.4 M14.7 8.4 H21.4 M16.6 14 H21.2" stroke="#646a73" stroke-width="1.7" stroke-linecap="round"/></g><g transform="translate(515.6,262.7)"><text transform="scale(.9,1)" x="-0.4" y="16.9" font-family="Liberation Sans,sans-serif" font-size="24.4" fill="#727883">A</text><path d="M12.6 2.8 H21.4 M14.7 8.4 H21.4 M16.6 14 H21.2" stroke="#646a73" stroke-width="1.7" stroke-linecap="round"/></g><g transform="translate(668,262.7)"><text transform="scale(.9,1)" x="-0.4" y="16.9" font-family="Liberation Sans,sans-serif" font-size="24.4" fill="#727883">A</text><path d="M12.6 2.8 H21.4 M14.7 8.4 H21.4 M16.6 14 H21.2" stroke="#646a73" stroke-width="1.7" stroke-linecap="round"/></g><g transform="translate(779,262.7)"><text transform="scale(.9,1)" x="-0.4" y="16.9" font-family="Liberation Sans,sans-serif" font-size="24.4" fill="#727883">A</text><path d="M12.6 2.8 H21.4 M14.7 8.4 H21.4 M16.6 14 H21.2" stroke="#646a73" stroke-width="1.7" stroke-linecap="round"/></g><g transform="translate(890,262.7)"><text transform="scale(.9,1)" x="-0.4" y="16.9" font-family="Liberation Sans,sans-serif" font-size="24.4" fill="#727883">A</text><path d="M12.6 2.8 H21.4 M14.7 8.4 H21.4 M16.6 14 H21.2" stroke="#646a73" stroke-width="1.7" stroke-linecap="round"/></g><g transform="translate(1140,262.7)"><text transform="scale(.9,1)" x="-0.4" y="16.9" font-family="Liberation Sans,sans-serif" font-size="24.4" fill="#727883">A</text><path d="M12.6 2.8 H21.4 M14.7 8.4 H21.4 M16.6 14 H21.2" stroke="#646a73" stroke-width="1.7" stroke-linecap="round"/></g><g transform="translate(1390,262.7)"><text transform="scale(.9,1)" x="-0.4" y="16.9" font-family="Liberation Sans,sans-serif" font-size="24.4" fill="#727883">A</text><path d="M12.6 2.8 H21.4 M14.7 8.4 H21.4 M16.6 14 H21.2" stroke="#646a73" stroke-width="1.7" stroke-linecap="round"/></g><g transform="translate(1640,262.7)"><text transform="scale(.9,1)" x="-0.4" y="16.9" font-family="Liberation Sans,sans-serif" font-size="24.4" fill="#727883">A</text><path d="M12.6 2.8 H21.4 M14.7 8.4 H21.4 M16.6 14 H21.2" stroke="#646a73" stroke-width="1.7" stroke-linecap="round"/></g><g transform="translate(1889,262.7)"><text transform="scale(.9,1)" x="-0.4" y="16.9" font-family="Liberation Sans,sans-serif" font-size="24.4" fill="#727883">A</text><path d="M12.6 2.8 H21.4 M14.7 8.4 H21.4 M16.6 14 H21.2" stroke="#646a73" stroke-width="1.7" stroke-linecap="round"/></g><g transform="translate(2139,262.7)"><text transform="scale(.9,1)" x="-0.4" y="16.9" font-family="Liberation Sans,sans-serif" font-size="24.4" fill="#727883">A</text><path d="M12.6 2.8 H21.4 M14.7 8.4 H21.4 M16.6 14 H21.2" stroke="#646a73" stroke-width="1.7" stroke-linecap="round"/></g><g transform="translate(292.2,997)" stroke="#8f959e" stroke-width="1.8" fill="none" stroke-linecap="round" stroke-linejoin="round" ><path d="M9.2 .9 V17.6 M.9 9.2 H17.6" /></g><g transform="translate(1981.8,1070.6)" stroke="#646a73" stroke-width="1.4" fill="none" stroke-linecap="round" stroke-linejoin="round" ><ellipse cx="6.3" cy="3.4" rx="5.5" ry="2.6"/><path d="M.8 3.4 V10.4 a5.5 2.6 0 0 0 11 0 V8.2 M.8 7 a5.5 2.6 0 0 0 11 0" /><path d="M12.6 -.3 L13.4 1.5 L15.2 2.3 L13.4 3.1 L12.6 4.9 L11.8 3.1 L10 2.3 L11.8 1.5 Z" fill="#646a73" stroke="none"/></g><g transform="translate(1948.5,1120.2)" stroke="#646a73" stroke-width="1.4" fill="none" stroke-linecap="round" stroke-linejoin="round" ><path d="M7.8 .8 L15 4.4 L7.8 8 L.7 4.4 Z M3.2 5.8 V10.4 a4.7 3.2 0 0 0 6 2.4 M12.6 5.8 V8.2" /><path d="M12.4 9 L13.2 10.9 L15.1 11.7 L13.2 12.5 L12.4 14.4 L11.6 12.5 L9.7 11.7 L11.6 10.9 Z" fill="#646a73" stroke="none"/></g><g transform="translate(1949,1170.5)" stroke="#646a73" stroke-width="1.4" fill="none" stroke-linecap="round" stroke-linejoin="round" ><path d="M.8 .8 H14 M.8 6 H8" /><path d="M12 3.4 L13 5.6 L15.2 6.6 L13 7.6 L12 9.8 L11 7.6 L8.8 6.6 L11 5.6 Z" fill="#646a73" stroke="none"/></g></svg>
</body></html>
